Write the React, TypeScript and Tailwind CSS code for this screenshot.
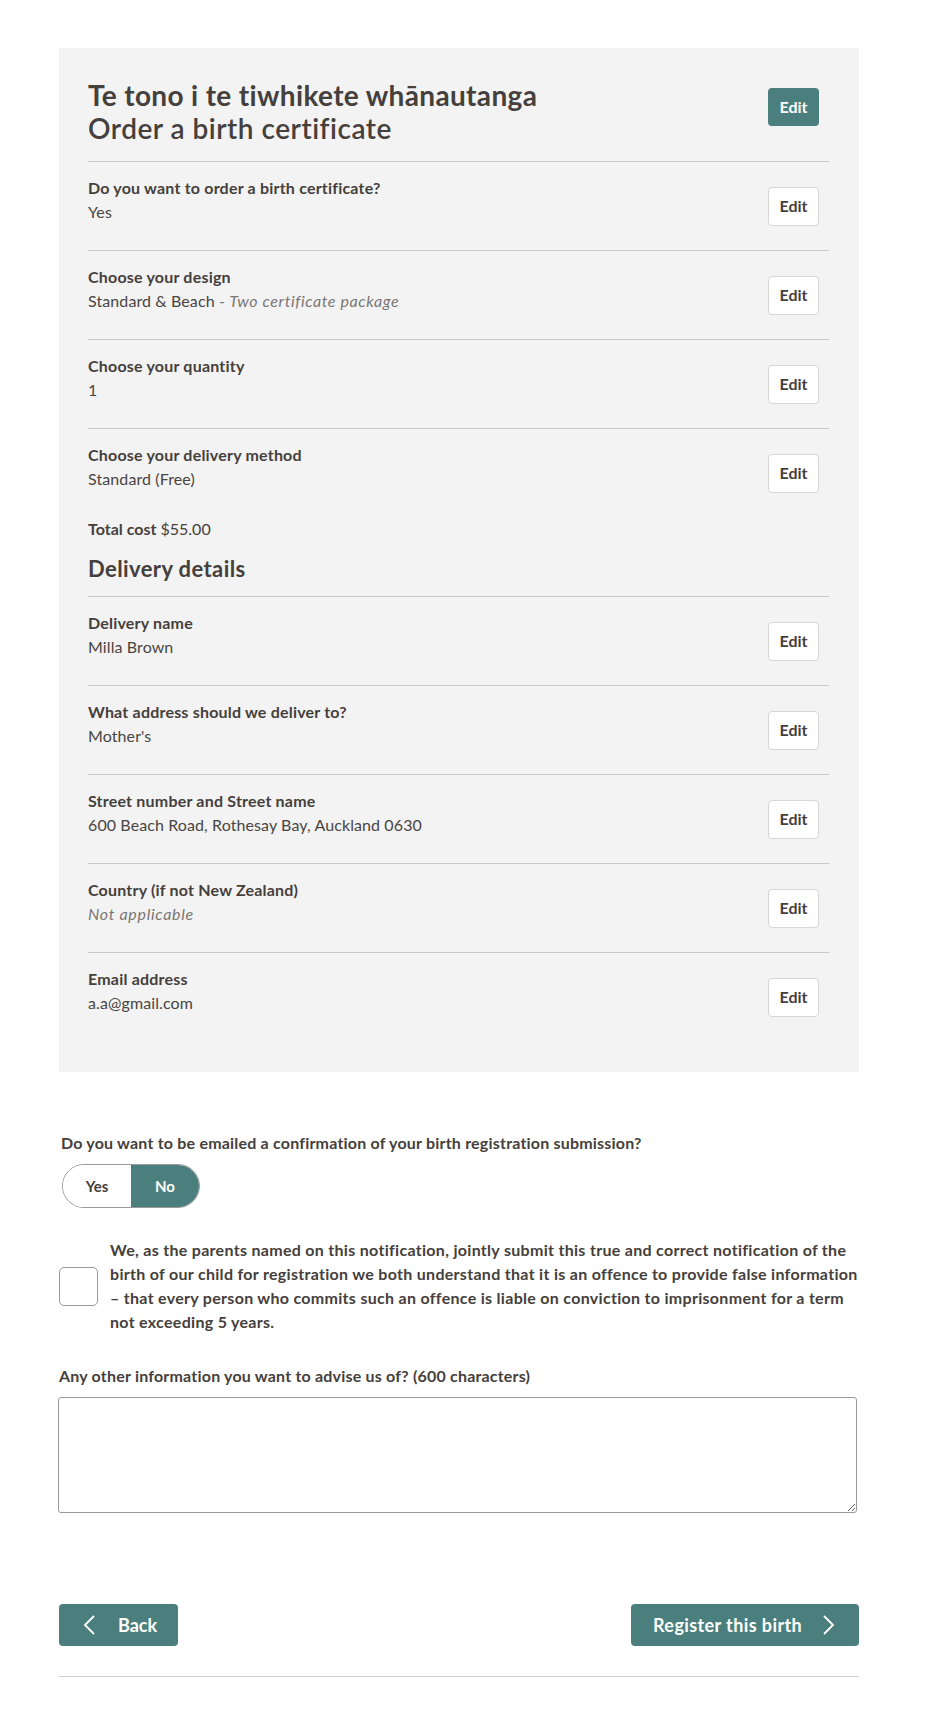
import React from 'react';

const rows1 = [
  { label: 'Do you want to order a birth certificate?', value: <>Yes</> },
  {
    label: 'Choose your design',
    value: (
      <>
        Standard &amp; Beach{' '}
        <span className="text-[#7a7672]">
          - <i className="tracking-[0.6px]">Two certificate package</i>
        </span>
      </>
    ),
  },
  { label: 'Choose your quantity', value: <>1</> },
  { label: 'Choose your delivery method', value: <>Standard (Free)</> },
];

const rows2 = [
  { label: 'Delivery name', value: <>Milla Brown</> },
  { label: 'What address should we deliver to?', value: <>Mother's</> },
  { label: 'Street number and Street name', value: <>600 Beach Road, Rothesay Bay, Auckland 0630</> },
  { label: 'Country (if not New Zealand)', value: <i className="tracking-[0.7px] text-[#7a7672]">Not applicable</i> },
  { label: 'Email address', value: <>a.a@gmail.com</> },
];

function EditButton() {
  return (
    <button className="mr-[10px] h-[39px] w-[51px] shrink-0 rounded-[4px] border border-[#d6d6d6] bg-white text-[16px] font-bold text-[#45403c]">
      Edit
    </button>
  );
}

function SummaryRow({ label, value }: { label: string; value: React.ReactNode }) {
  return (
    <div className="flex items-center justify-between border-t border-[#c9c9c9]">
      <div className="pt-[14px] pb-[26px] text-[16px] leading-[24px]">
        <div className="font-bold tracking-[0.2px] text-[#45403c]">{label}</div>
        <div className="tracking-[0.1px] text-[#4a4541]">{value}</div>
      </div>
      <EditButton />
    </div>
  );
}

function Chevron({ dir }: { dir: 'left' | 'right' }) {
  return (
    <svg width="13" height="20" viewBox="0 0 13 20" fill="none" className="shrink-0">
      <polyline
        points={dir === 'left' ? '11,1 2,10 11,19' : '2,1 11,10 2,19'}
        stroke="white"
        strokeWidth="1.8"
        strokeLinejoin="miter"
      />
    </svg>
  );
}

export default function App() {
  return (
    <div className="min-h-screen bg-white font-['Lato','Noto_Sans',sans-serif] text-[#45403c]">
      <div className="ml-[59px] w-[800px] pt-[48px] pb-[34px]">
        {/* Summary panel */}
        <section className="bg-[#f3f3f3] pt-[31px] pr-[30px] pb-[31px] pl-[29px]">
          <div className="mb-[16px] flex items-start justify-between">
            <h2 className="text-[28px] leading-[33px] text-[#45403c]">
              <span className="block font-bold tracking-[0.35px]">Te tono i te tiwhikete whānautanga</span>
              <span className="block font-semibold tracking-[0.5px]">Order a birth certificate</span>
            </h2>
            <button className="mt-[9px] mr-[10px] h-[38px] w-[51px] rounded-[4px] bg-[#4a7f7d] text-[16px] font-bold text-white">
              Edit
            </button>
          </div>

          {rows1.map((r) => (
            <SummaryRow key={r.label} label={r.label} value={r.value} />
          ))}

          <p className="text-[16px] leading-[24px]">
            <span className="font-bold">Total cost</span> $55.00
          </p>
          <h3 className="mt-[14px] mb-[13px] text-[22px] font-bold leading-[28px] tracking-[0.4px]">
            Delivery details
          </h3>

          {rows2.map((r, i) => (
            <SummaryRow key={i} label={r.label} value={r.value} />
          ))}
        </section>

        {/* Email confirmation */}
        <p className="mt-[59px] ml-[2px] text-[16px] font-bold leading-[24px] tracking-[0.2px]">
          Do you want to be emailed a confirmation of your birth registration submission?
        </p>
        <div className="mt-[9px] ml-[3px] flex h-[44px] w-[138px] overflow-hidden rounded-full border border-[#9a9a9a] text-[15px] font-bold">
          <button className="flex w-[68px] items-center justify-center bg-white text-[#45403c]">Yes</button>
          <button className="flex flex-1 items-center justify-center bg-[#4a7f7d] text-white">No</button>
        </div>

        {/* Declaration */}
        <label className="mt-[30px] flex items-center gap-[12px]">
          <span className="h-[39px] w-[39px] shrink-0 rounded-[5px] border border-[#9a9a9a] bg-white" />
          <span className="text-[16px] font-bold leading-[24px] tracking-[0.3px]">
            We, as the parents named on this notification, jointly submit this true and correct notification of the
            birth of our child for registration we both understand that it is an offence to provide false information
            – that every person who commits such an offence is liable on conviction to imprisonment for a term not
            exceeding 5 years.
          </span>
        </label>

        {/* Other info */}
        <p className="mt-[30px] text-[16px] font-bold leading-[24px] tracking-[0.2px]">
          Any other information you want to advise us of? (600 characters)
        </p>
        <textarea className="mt-[9px] -ml-[1px] block h-[116px] w-[799px] rounded-[3px] border border-[#9a9a9a] bg-white" />

        {/* Navigation */}
        <div className="mt-[91px] flex items-center justify-between">
          <button className="flex h-[42px] w-[119px] items-center gap-[22px] rounded-[4px] bg-[#4a7f7d] pl-[24px] text-[18px] font-bold text-white">
            <Chevron dir="left" />
            Back
          </button>
          <button className="flex h-[42px] w-[228px] items-center gap-[20px] rounded-[4px] bg-[#4a7f7d] pl-[22px] text-[18px] font-bold tracking-[0.4px] text-white">
            Register this birth
            <Chevron dir="right" />
          </button>
        </div>
        <hr className="mt-[30px] border-t border-[#cfcfcf]" />
      </div>
    </div>
  );
}
